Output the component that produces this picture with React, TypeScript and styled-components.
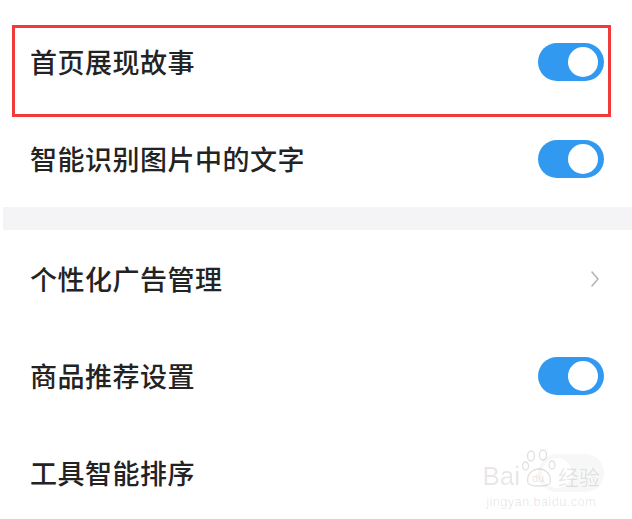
import React from 'react';
import styled, { createGlobalStyle } from 'styled-components';

const GlobalStyle = createGlobalStyle`
  html, body {
    margin: 0;
    padding: 0;
    background: #ffffff;
  }
  body {
    font-family: "Noto Sans CJK SC", "Noto Sans", sans-serif;
    overflow: hidden;
  }
`;

const Page = styled.div`
  position: relative;
  width: 632px;
  height: 519px;
  padding-top: 13px;
  box-sizing: border-box;
  background: #ffffff;
  overflow: hidden;
`;

const Row = styled.div`
  position: relative;
  display: flex;
  align-items: center;
  justify-content: space-between;
  height: 97px;
  padding: 0 28px 0 30px;
  box-sizing: border-box;
`;

const Label = styled.span`
  font-size: 27px;
  font-weight: 500;
  color: #232323;
  letter-spacing: 0.5px;
`;

const Divider = styled.div`
  height: 23px;
  margin-left: 3px;
  background: #f4f4f6;
`;

const Highlight = styled.div`
  position: absolute;
  left: 12px;
  right: 21px;
  top: 12px;
  bottom: -7px;
  border: 3px solid #f23a3a;
  pointer-events: none;
`;

const Track = styled.div<{ $on: boolean }>`
  position: relative;
  width: 66px;
  height: 38px;
  border-radius: 19px;
  background: ${p => (p.$on ? '#3199ef' : '#f2f2f2')};
  opacity: ${p => (p.$on ? 1 : 0.6)};
`;

const Knob = styled.div<{ $on: boolean }>`
  position: absolute;
  top: 4px;
  left: ${p => (p.$on ? '30px' : '4px')};
  width: 30px;
  height: 30px;
  border-radius: 50%;
  background: #ffffff;
`;

const Chevron = styled.svg`
  width: 12px;
  height: 20px;
  margin-right: 3px;
`;

const Watermark = styled.div`
  position: absolute;
  right: 32px;
  bottom: 10px;
  display: flex;
  flex-direction: column;
  align-items: center;
  color: rgba(0, 0, 0, 0.1);
  pointer-events: none;
`;

const MarkTop = styled.div`
  display: flex;
  align-items: flex-end;
  gap: 2px;
  font-family: "Liberation Sans", Arial, sans-serif;
  font-size: 26px;
  line-height: 26px;
`;

const MarkSub = styled.div`
  font-family: "Liberation Sans", Arial, sans-serif;
  font-size: 13px;
  margin-top: 5px;
  letter-spacing: 0.3px;
`;

const CjkMark = styled.span`
  font-family: "Noto Sans CJK SC", sans-serif;
  font-size: 21px;
`;

const Toggle: React.FC<{ on: boolean }> = ({ on }) => (
  <Track $on={on}>
    <Knob $on={on} />
  </Track>
);

const Paw = () => (
  <svg width="34" height="40" viewBox="0 0 34 40" fill="none" stroke="rgba(0,0,0,0.12)" strokeWidth="1.3">
    <ellipse cx="9" cy="7" rx="3.5" ry="5" />
    <ellipse cx="21" cy="6" rx="3.5" ry="5" />
    <ellipse cx="3.5" cy="17" rx="3" ry="4" />
    <ellipse cx="30" cy="16" rx="3" ry="4" />
    <path d="M6 34 C4 26 10 20 17 20 C24 20 30 26 28 34 C26 38 8 38 6 34 Z" />
    <text x="10" y="33" fontSize="11" fill="rgba(0,0,0,0.12)" stroke="none" fontFamily="Liberation Sans, sans-serif">du</text>
  </svg>
);

export default function App() {
  return (
    <>
      <GlobalStyle />
      <Page>
        <Row>
          <Highlight />
          <Label>首页展现故事</Label>
          <Toggle on />
        </Row>
        <Row>
          <Label>智能识别图片中的文字</Label>
          <Toggle on />
        </Row>
        <Divider />
        <Row>
          <Label>个性化广告管理</Label>
          <Chevron viewBox="0 0 12 20">
            <path d="M3 3 L9 10 L3 17" fill="none" stroke="#b4b4b4" strokeWidth="1.6" strokeLinecap="round" strokeLinejoin="round" />
          </Chevron>
        </Row>
        <Row>
          <Label>商品推荐设置</Label>
          <Toggle on />
        </Row>
        <Row>
          <Label>工具智能排序</Label>
          <Toggle on={false} />
        </Row>
        <Watermark>
          <MarkTop>
            <span>Bai</span>
            <Paw />
            <CjkMark>经验</CjkMark>
          </MarkTop>
          <MarkSub>jingyan.baidu.com</MarkSub>
        </Watermark>
      </Page>
    </>
  );
}
